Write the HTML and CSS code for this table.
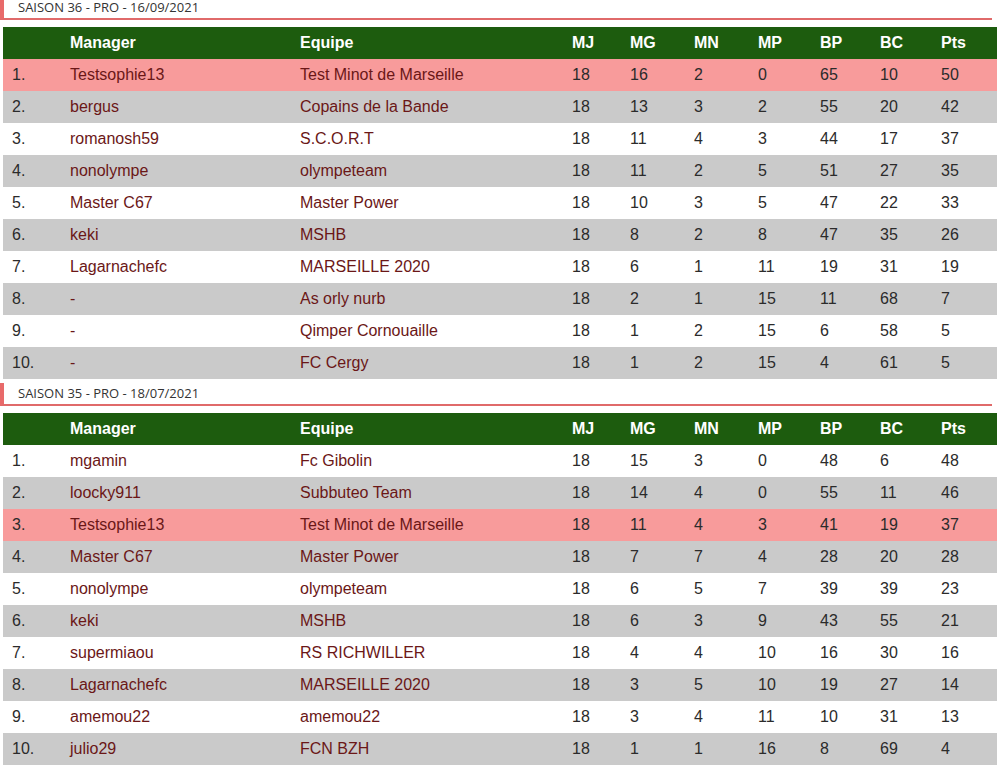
FILE: index.html
```html
<!DOCTYPE html>
<html lang="fr">
<head>
<meta charset="utf-8">
<title>Classements</title>
<link rel="stylesheet" href="styles.css">
</head>
<body>
<div class="page">
  <div class="season-title first">SAISON 36 - PRO - 16/09/2021</div>
  <table class="ranking">
    <colgroup>
      <col class="c-rank"><col class="c-manager"><col class="c-team"><col class="c-mj"><col class="c-mg"><col class="c-mn"><col class="c-mp"><col class="c-bp"><col class="c-bc"><col class="c-pts">
    </colgroup>
    <thead>
      <tr><th></th><th>Manager</th><th>Equipe</th><th>MJ</th><th>MG</th><th>MN</th><th>MP</th><th>BP</th><th>BC</th><th>Pts</th></tr>
    </thead>
    <tbody>
      <tr class="me"><td>1.</td><td class="name">Testsophie13</td><td class="name">Test Minot de Marseille</td><td>18</td><td>16</td><td>2</td><td>0</td><td>65</td><td>10</td><td>50</td></tr>
      <tr><td>2.</td><td class="name">bergus</td><td class="name">Copains de la Bande</td><td>18</td><td>13</td><td>3</td><td>2</td><td>55</td><td>20</td><td>42</td></tr>
      <tr><td>3.</td><td class="name">romanosh59</td><td class="name">S.C.O.R.T</td><td>18</td><td>11</td><td>4</td><td>3</td><td>44</td><td>17</td><td>37</td></tr>
      <tr><td>4.</td><td class="name">nonolympe</td><td class="name">olympeteam</td><td>18</td><td>11</td><td>2</td><td>5</td><td>51</td><td>27</td><td>35</td></tr>
      <tr><td>5.</td><td class="name">Master C67</td><td class="name">Master Power</td><td>18</td><td>10</td><td>3</td><td>5</td><td>47</td><td>22</td><td>33</td></tr>
      <tr><td>6.</td><td class="name">keki</td><td class="name">MSHB</td><td>18</td><td>8</td><td>2</td><td>8</td><td>47</td><td>35</td><td>26</td></tr>
      <tr><td>7.</td><td class="name">Lagarnachefc</td><td class="name">MARSEILLE 2020</td><td>18</td><td>6</td><td>1</td><td>11</td><td>19</td><td>31</td><td>19</td></tr>
      <tr><td>8.</td><td class="name">-</td><td class="name">As orly nurb</td><td>18</td><td>2</td><td>1</td><td>15</td><td>11</td><td>68</td><td>7</td></tr>
      <tr><td>9.</td><td class="name">-</td><td class="name">Qimper Cornouaille</td><td>18</td><td>1</td><td>2</td><td>15</td><td>6</td><td>58</td><td>5</td></tr>
      <tr><td>10.</td><td class="name">-</td><td class="name">FC Cergy</td><td>18</td><td>1</td><td>2</td><td>15</td><td>4</td><td>61</td><td>5</td></tr>
    </tbody>
  </table>

  <div class="season-title">SAISON 35 - PRO - 18/07/2021</div>
  <table class="ranking">
    <colgroup>
      <col class="c-rank"><col class="c-manager"><col class="c-team"><col class="c-mj"><col class="c-mg"><col class="c-mn"><col class="c-mp"><col class="c-bp"><col class="c-bc"><col class="c-pts">
    </colgroup>
    <thead>
      <tr><th></th><th>Manager</th><th>Equipe</th><th>MJ</th><th>MG</th><th>MN</th><th>MP</th><th>BP</th><th>BC</th><th>Pts</th></tr>
    </thead>
    <tbody>
      <tr><td>1.</td><td class="name">mgamin</td><td class="name">Fc Gibolin</td><td>18</td><td>15</td><td>3</td><td>0</td><td>48</td><td>6</td><td>48</td></tr>
      <tr><td>2.</td><td class="name">loocky911</td><td class="name">Subbuteo Team</td><td>18</td><td>14</td><td>4</td><td>0</td><td>55</td><td>11</td><td>46</td></tr>
      <tr class="me"><td>3.</td><td class="name">Testsophie13</td><td class="name">Test Minot de Marseille</td><td>18</td><td>11</td><td>4</td><td>3</td><td>41</td><td>19</td><td>37</td></tr>
      <tr><td>4.</td><td class="name">Master C67</td><td class="name">Master Power</td><td>18</td><td>7</td><td>7</td><td>4</td><td>28</td><td>20</td><td>28</td></tr>
      <tr><td>5.</td><td class="name">nonolympe</td><td class="name">olympeteam</td><td>18</td><td>6</td><td>5</td><td>7</td><td>39</td><td>39</td><td>23</td></tr>
      <tr><td>6.</td><td class="name">keki</td><td class="name">MSHB</td><td>18</td><td>6</td><td>3</td><td>9</td><td>43</td><td>55</td><td>21</td></tr>
      <tr><td>7.</td><td class="name">supermiaou</td><td class="name">RS RICHWILLER</td><td>18</td><td>4</td><td>4</td><td>10</td><td>16</td><td>30</td><td>16</td></tr>
      <tr><td>8.</td><td class="name">Lagarnachefc</td><td class="name">MARSEILLE 2020</td><td>18</td><td>3</td><td>5</td><td>10</td><td>19</td><td>27</td><td>14</td></tr>
      <tr><td>9.</td><td class="name">amemou22</td><td class="name">amemou22</td><td>18</td><td>3</td><td>4</td><td>11</td><td>10</td><td>31</td><td>13</td></tr>
      <tr><td>10.</td><td class="name">julio29</td><td class="name">FCN BZH</td><td>18</td><td>1</td><td>1</td><td>16</td><td>8</td><td>69</td><td>4</td></tr>
    </tbody>
  </table>
</div>
</body>
</html>
```

FILE: styles.css
```css
html, body {
  margin: 0;
  padding: 0;
  background: #ffffff;
}

.page {
  width: 1004px;
  font-family: "Liberation Sans", Arial, sans-serif;
  color: #333333;
}

.season-title {
  width: 974px;
  height: 21px;
  line-height: 21px;
  padding-left: 14px;
  border-left: 4px solid #e86a6a;
  border-bottom: 2px solid #e06a6a;
  font-family: "Open Sans", "Liberation Sans", sans-serif;
  font-size: 13px;
  color: #333333;
  margin-top: 4px;
  margin-bottom: 7px;
}

.season-title.first {
  margin-top: -3px;
}

.ranking {
  margin-left: 3px;
  width: 994px;
  table-layout: fixed;
  border-collapse: collapse;
  border-spacing: 0;
  font-size: 16px;
}

.c-rank { width: 58px; }
.c-manager { width: 230px; }
.c-team { width: 272px; }
.c-mj { width: 58px; }
.c-mg { width: 64px; }
.c-mn { width: 64px; }
.c-mp { width: 62px; }
.c-bp { width: 60px; }
.c-bc { width: 61px; }
.c-pts { width: 65px; }

.ranking th,
.ranking td {
  height: 32px;
  padding: 0 0 0 9px;
  text-align: left;
  vertical-align: middle;
  white-space: nowrap;
}

.ranking thead tr {
  background: #1d5c0e;
}

.ranking th {
  color: #ffffff;
  font-weight: bold;
}

.ranking tbody tr:nth-child(odd) {
  background: #ffffff;
}

.ranking tbody tr:nth-child(even) {
  background: #cacaca;
}

.ranking tbody tr.me {
  background: #f89b9b;
}

.ranking td {
  color: #2b2b2b;
}

.ranking td.name {
  color: #6b1717;
}
```
